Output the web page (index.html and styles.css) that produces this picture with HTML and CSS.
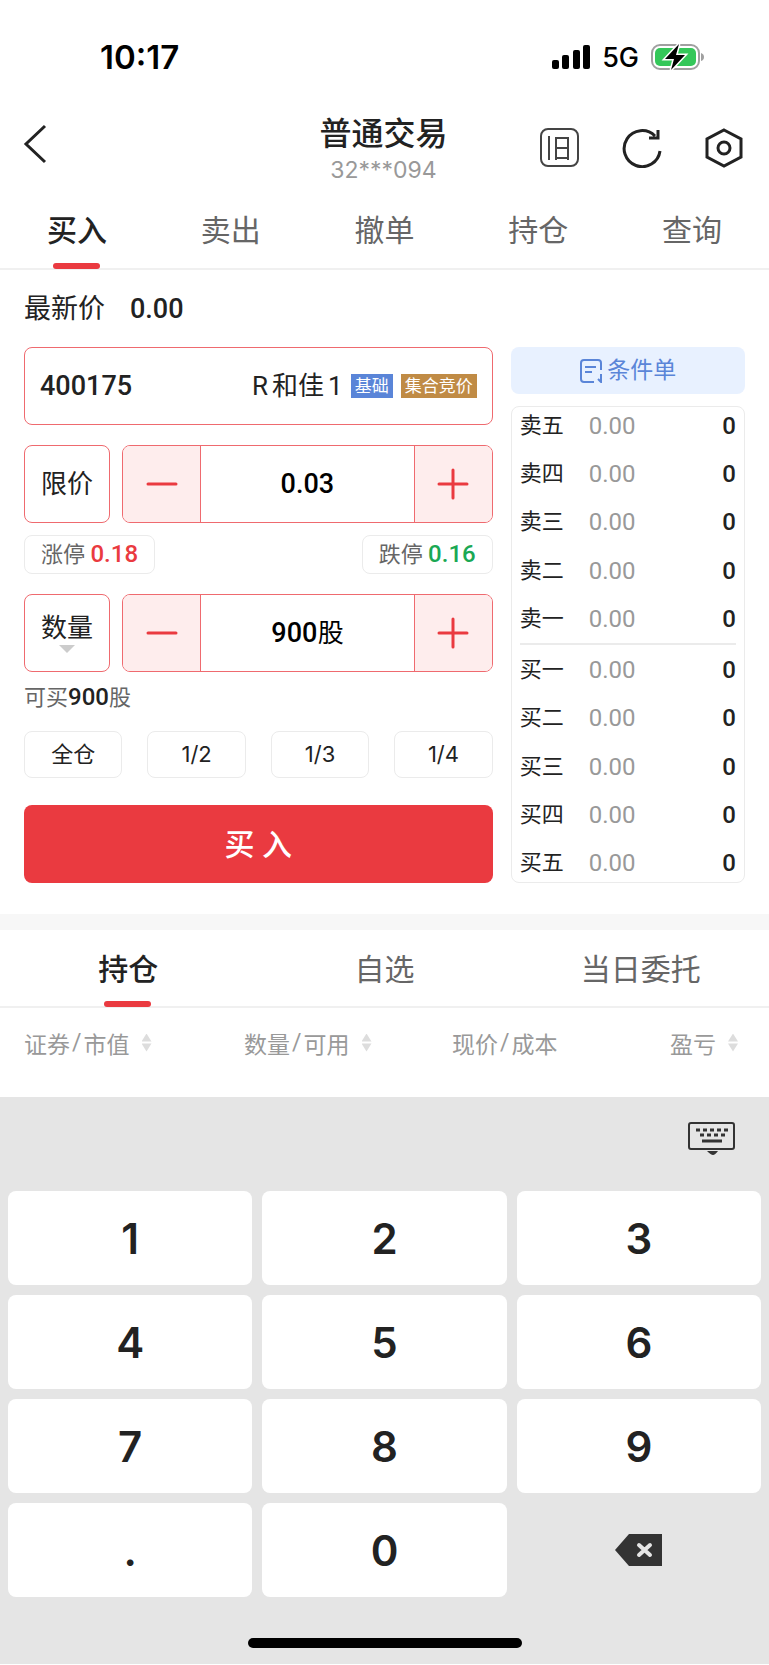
FILE: index.html
```html
<!DOCTYPE html>
<html lang="zh-CN">
<head>
    <meta charset="UTF-8">
    <meta name="viewport" content="width=device-width, initial-scale=1.0">
    <title>普通交易</title>
    <link rel="stylesheet" href="styles.css">
</head>
<body>

    <!-- Status Bar -->
    <div class="status-bar">
        <span class="time">10:17</span>
        <div class="status-icons">
            <svg width="38" height="25" viewBox="0 0 38 25">
                <rect x="0" y="15" width="7" height="9" rx="2"/>
                <rect x="10" y="10" width="7" height="14" rx="2"/>
                <rect x="21" y="5" width="7" height="19" rx="2"/>
                <rect x="31" y="0" width="7" height="24" rx="2"/>
            </svg>
            <span class="network">5G</span>
            <svg width="54" height="28" viewBox="0 0 54 28">
                <rect x="1" y="2" width="47" height="24" rx="8" fill="none" stroke="#a0a0a0" stroke-width="2"/>
                <rect x="4" y="5" width="41" height="18" rx="5" fill="#34c759"/>
                <path d="M50 10q3 1 3 4t-3 4z" fill="#a0a0a0"/>
                <path d="M28 1L14 16h9l-3 11 14-15h-9z" stroke="#fff" stroke-width="3" paint-order="stroke"/>
            </svg>
        </div>
    </div>

    <!-- Header -->
    <header class="header">
        <button class="icon-btn back" aria-label="返回">
            <svg width="24" height="40" viewBox="0 0 24 40"><path d="M22 2L3 20l19 18" stroke-width="3"/></svg>
        </button>
        <div class="heading">
            <h1>普通交易</h1>
            <p>32***094</p>
        </div>
        <div class="header-actions">
            <button class="icon-btn" aria-label="旧版">
                <svg width="40" height="40" viewBox="0 0 40 40">
                    <rect x="1" y="1" width="37" height="37" rx="7" stroke="#444" stroke-width="2"/>
                    <path d="M9 8v24M16 32V10h12v22M16 20h12M16 30h12" stroke="#444" stroke-width="2"/>
                </svg>
            </button>
            <button class="icon-btn" aria-label="刷新">
                <svg width="40" height="40" viewBox="0 0 40 40">
                    <path d="M38 23A18 18 0 1 1 33 8M36 2v8h-9" stroke-width="3"/>
                </svg>
            </button>
            <button class="icon-btn" aria-label="设置">
                <svg width="40" height="40" viewBox="0 0 40 40">
                    <path d="M20 2l17 9v18l-17 9-17-9V11z" stroke-width="3"/>
                    <circle cx="20" cy="20" r="6" stroke-width="3"/>
                </svg>
            </button>
        </div>
    </header>

    <!-- Trade Tabs -->
    <nav class="tabs">
        <a href="#buy" class="active">买入</a>
        <a href="#sell">卖出</a>
        <a href="#cancel">撤单</a>
        <a href="#hold">持仓</a>
        <a href="#query">查询</a>
    </nav>

    <!-- Order Form -->
    <section class="trade" id="buy">
        <p class="latest">最新价<b>0.00</b></p>
        <div class="trade-cols">
            <form class="order">
                <div class="stock">
                    <input type="text" value="400175" aria-label="证券代码">
                    <span class="stock-name">R<span>和佳</span>1</span>
                    <span class="badge blue">基础</span>
                    <span class="badge gold">集合竞价</span>
                </div>
                <div class="field">
                    <button type="button" class="kind">限价</button>
                    <div class="stepper">
                        <button type="button" aria-label="减少价格"><svg width="32" height="32" viewBox="0 0 32 32"><path d="M2 16h28"/></svg></button>
                        <label class="value"><input type="text" value="0.03" aria-label="价格"></label>
                        <button type="button" aria-label="增加价格"><svg width="32" height="32" viewBox="0 0 32 32"><path d="M2 16h28M16 2v28"/></svg></button>
                    </div>
                </div>
                <div class="limits">
                    <button type="button">涨停 <b class="up">0.18</b></button>
                    <button type="button">跌停 <b class="down">0.16</b></button>
                </div>
                <div class="field">
                    <button type="button" class="kind">数量<i class="caret"></i></button>
                    <div class="stepper">
                        <button type="button" aria-label="减少数量"><svg width="32" height="32" viewBox="0 0 32 32"><path d="M2 16h28"/></svg></button>
                        <label class="value"><input type="text" class="amount" value="900" aria-label="数量">股</label>
                        <button type="button" aria-label="增加数量"><svg width="32" height="32" viewBox="0 0 32 32"><path d="M2 16h28M16 2v28"/></svg></button>
                    </div>
                </div>
                <p class="available">可买<b>900</b>股</p>
                <div class="portions">
                    <button type="button">全仓</button>
                    <button type="button">1/2</button>
                    <button type="button">1/3</button>
                    <button type="button">1/4</button>
                </div>
                <button type="button" class="submit">买 入</button>
            </form>

            <div class="quotes">
                <button type="button" class="condition">
                    <svg width="24" height="24" viewBox="0 0 24 24">
                        <path d="M15 23H5q-3 0-3-3V4q0-3 3-3h14q3 0 3 3v7M22 15v8l-3-3M6 8h11M6 13h7"/>
                    </svg>
                    条件单
                </button>
                <div class="book">
                    <table>
                        <tr><th>卖五</th><td>0.00</td><td>0</td></tr>
                        <tr><th>卖四</th><td>0.00</td><td>0</td></tr>
                        <tr><th>卖三</th><td>0.00</td><td>0</td></tr>
                        <tr><th>卖二</th><td>0.00</td><td>0</td></tr>
                        <tr class="last-ask"><th>卖一</th><td>0.00</td><td>0</td></tr>
                        <tr><th>买一</th><td>0.00</td><td>0</td></tr>
                        <tr><th>买二</th><td>0.00</td><td>0</td></tr>
                        <tr><th>买三</th><td>0.00</td><td>0</td></tr>
                        <tr><th>买四</th><td>0.00</td><td>0</td></tr>
                        <tr><th>买五</th><td>0.00</td><td>0</td></tr>
                    </table>
                </div>
            </div>
        </div>
    </section>

    <!-- Holdings -->
    <section class="holdings" id="hold">
        <nav class="tabs">
            <a href="#hold" class="active">持仓</a>
            <a href="#watch">自选</a>
            <a href="#orders">当日委托</a>
        </nav>
        <div class="columns">
            <button>证券<span>/</span>市值<i class="sort"></i></button>
            <button>数量<span>/</span>可用<i class="sort"></i></button>
            <button>现价<span>/</span>成本</button>
            <button>盈亏<i class="sort"></i></button>
        </div>
    </section>

    <!-- Number Keyboard -->
    <section class="keyboard">
        <div class="keyboard-bar">
            <button class="icon-btn" aria-label="收起键盘">
                <svg width="48" height="34" viewBox="0 0 48 34">
                    <rect x="1" y="1" width="45" height="26" rx="2" stroke-width="2"/>
                    <path d="M8 8h32" stroke-width="3" stroke-dasharray="4 3"/>
                    <path d="M12 13h25" stroke-width="3" stroke-dasharray="4 3"/>
                    <path d="M14 19h20" stroke-width="3"/>
                    <path d="M19 29h11q-3 4-5 4t-6-4z" fill="#333" stroke="none"/>
                </svg>
            </button>
        </div>
        <div class="keys">
            <button>1</button>
            <button>2</button>
            <button>3</button>
            <button>4</button>
            <button>5</button>
            <button>6</button>
            <button>7</button>
            <button>8</button>
            <button>9</button>
            <button>.</button>
            <button>0</button>
            <button class="delete" aria-label="删除">
                <svg width="48" height="32" viewBox="0 0 48 32">
                    <path d="M0 16L14 0h33v32H14z" fill="#333"/>
                    <path d="M24 11l11 10M35 11L24 21" stroke="#e5e5e5" stroke-width="4" stroke-linecap="round"/>
                </svg>
            </button>
        </div>
        <div class="home-bar"></div>
    </section>

</body>
</html>
```

FILE: styles.css
```css
/* General Styles */
* {
    box-sizing: border-box;
}

body {
    font-family: Roboto, "Noto Sans CJK SC", sans-serif;
    margin: 0;
    background-color: #fff;
    color: #222;
}

h1, p {
    margin: 0;
}

button, input {
    font: inherit;
    color: inherit;
    margin: 0;
    padding: 0;
    border: none;
    background: none;
}

button {
    cursor: pointer;
}

b {
    font-weight: 500;
}

svg {
    display: block;
}

/* Status Bar */
.status-bar {
    display: flex;
    justify-content: space-between;
    align-items: center;
    height: 114px;
    padding: 0 64px 0 100px;
    font-family: Inter, sans-serif;
    color: #000;
}

.time {
    font-size: 33px;
    font-weight: 600;
}

.status-icons {
    display: flex;
    align-items: center;
}

.network {
    margin: 0 12px;
    font-size: 27px;
    font-weight: 500;
}

/* Header */
.header {
    display: grid;
    grid-template-columns: 1fr auto 1fr;
    align-items: center;
    height: 68px;
    padding: 0 25px 0 23px;
}

.icon-btn svg {
    fill: none;
    stroke: #222;
}

.back {
    justify-self: start;
    padding-bottom: 12px;
}

.heading {
    text-align: center;
}

.heading h1 {
    font-size: 32px;
    font-weight: 500;
    line-height: 40px;
}

.heading p {
    font-family: Inter, sans-serif;
    font-size: 23px;
    line-height: 32px;
    color: #999;
}

.header-actions {
    display: flex;
    justify-content: flex-end;
    gap: 42px;
    padding-bottom: 4px;
}

/* Tabs */
.tabs {
    display: flex;
    border-bottom: 2px solid #f0f0f0;
}

.tabs a {
    position: relative;
    flex: 1;
    height: 86px;
    font-size: 30px;
    line-height: 98px;
    text-align: center;
    text-decoration: none;
    color: #666;
}

.tabs .active {
    font-weight: 500;
    color: #222;
}

.tabs .active::after {
    content: "";
    position: absolute;
    left: 50%;
    bottom: -1px;
    width: 47px;
    height: 6px;
    margin-left: -24px;
    border-radius: 3px;
    background: #ea3a40;
}

/* Order Form */
.trade {
    padding: 0 24px 31px;
}

.latest {
    font-size: 27px;
    line-height: 78px;
}

.latest b {
    margin-left: 25px;
}

.trade-cols {
    display: grid;
    grid-template-columns: minmax(0, 2fr) minmax(0, 1fr);
    gap: 18px;
    margin-top: -1px;
}

.stock {
    display: flex;
    align-items: center;
    height: 78px;
    padding: 0 15px;
    border: 1px solid #ef6a6f;
    border-radius: 8px;
}

.stock input {
    flex: 1;
    min-width: 0;
    font-size: 27px;
    font-weight: 500;
}

.stock-name {
    font-size: 26px;
    line-height: 36px;
    white-space: nowrap;
}

.stock-name span {
    margin: 0 4px;
}

.badge {
    height: 24px;
    margin-left: 8px;
    padding: 0 4px;
    font-size: 17px;
    line-height: 24px;
    white-space: nowrap;
    color: #fff;
}

.blue {
    background: #5a85d8;
}

.gold {
    background: #c08b45;
}

.field {
    display: flex;
    gap: 12px;
    height: 78px;
    margin-top: 20px;
}

.kind {
    width: 86px;
    border: 1px solid #ef6a6f;
    border-radius: 8px;
    font-size: 26px;
    line-height: 30px;
}

.caret {
    display: block;
    width: 16px;
    height: 8px;
    margin: 2px auto 0;
    background: #ccc;
    clip-path: polygon(0 0, 100% 0, 50% 100%);
}

.stepper {
    display: flex;
    flex: 1;
    border: 1px solid #ef6a6f;
    border-radius: 8px;
    overflow: hidden;
}

.stepper button {
    display: flex;
    justify-content: center;
    align-items: center;
    width: 77px;
    background: #feeded;
}

.stepper svg {
    fill: none;
    stroke: #ea3a40;
    stroke-width: 3;
    stroke-linecap: round;
}

.value {
    display: flex;
    flex: 1;
    justify-content: center;
    align-items: baseline;
    border: solid #ef6a6f;
    border-width: 0 1px;
    font-size: 26px;
    line-height: 76px;
    color: #000;
}

.value input {
    width: 100%;
    height: 76px;
    font-size: 27px;
    font-weight: 500;
    text-align: center;
}

.value .amount {
    width: 47px;
}

.limits {
    display: flex;
    justify-content: space-between;
    margin-top: 12px;
}

.limits button {
    width: 131px;
    height: 39px;
    border: 1px solid #ebebeb;
    border-radius: 8px;
    font-size: 22px;
    line-height: 36px;
    color: #666;
}

.limits b {
    font-size: 24px;
}

.limits .up {
    color: #ea3a40;
}

.limits .down {
    color: #1aa854;
}

.available {
    margin-top: 10px;
    font-size: 22px;
    line-height: 30px;
    color: #666;
}

.available b {
    font-size: 24px;
    color: #222;
}

.portions {
    display: grid;
    grid-template-columns: repeat(4, 1fr);
    gap: 25px;
    margin-top: 18px;
}

.portions button {
    height: 47px;
    padding-bottom: 2px;
    border: 1px solid #ebebeb;
    border-radius: 8px;
    font-family: Inter, "Noto Sans CJK SC", sans-serif;
    font-size: 22px;
    line-height: 32px;
}

.submit {
    width: 100%;
    height: 78px;
    margin-top: 27px;
    padding-bottom: 4px;
    border-radius: 8px;
    background: #ea3a40;
    font-size: 30px;
    font-weight: 500;
    color: #fff;
}

/* Quotes */
.quotes {
    display: flex;
    flex-direction: column;
    gap: 12px;
}

.condition {
    display: flex;
    justify-content: center;
    align-items: center;
    gap: 4px;
    height: 47px;
    border-radius: 8px;
    background: #e8f1ff;
    font-size: 23px;
    line-height: 30px;
    color: #5a85d8;
}

.condition svg {
    fill: none;
    stroke: #5a85d8;
    stroke-width: 2;
}

.book {
    flex: 1;
    padding: 0 8px;
    border: 1px solid #ebebeb;
    border-radius: 8px;
    overflow: hidden;
}

.book table {
    width: 100%;
    height: 485px;
    margin: -5px 0;
    border-collapse: collapse;
    font-size: 24px;
    line-height: 30px;
}

.book th,
.book td {
    padding: 0;
    text-align: left;
}

.book th {
    width: 69px;
    font-size: 22px;
    font-weight: 400;
}

.book td {
    color: #999;
}

.book td:last-child {
    font-weight: 500;
    text-align: right;
    color: #222;
}

.last-ask {
    border-bottom: 2px solid #ebebeb;
}

/* Holdings */
.holdings {
    border-top: 16px solid #f7f7f7;
}

.holdings .tabs a {
    height: 76px;
    line-height: 80px;
}

.columns {
    display: grid;
    grid-template-columns: 220px 208px 1fr auto;
    height: 89px;
    padding: 0 31px 20px 24px;
}

.columns button {
    display: flex;
    align-items: center;
    font-size: 23px;
    color: #999;
}

.columns span {
    margin: 0 2px;
}

.sort {
    width: 10px;
    height: 18px;
    margin-left: 12px;
    background: #ddd;
    clip-path: polygon(50% 0, 100% 8px, 100% 10px, 50% 100%, 0 10px, 100% 10px, 100% 8px, 0 8px);
}

/* Number Keyboard */
.keyboard {
    padding: 0 8px 16px;
    background: #e5e5e5;
}

.keyboard-bar {
    display: flex;
    justify-content: flex-end;
    height: 94px;
    padding: 25px 25px 0 0;
}

.keyboard-bar .icon-btn {
    height: 34px;
}

.keyboard-bar svg {
    stroke: #333;
}

.keys {
    display: grid;
    grid-template-columns: repeat(3, 1fr);
    gap: 10px;
}

.keys button {
    height: 94px;
    border-radius: 8px;
    background: #fff;
    font-family: Inter, sans-serif;
    font-size: 42px;
    font-weight: 600;
}

.keys .delete {
    display: flex;
    justify-content: center;
    align-items: center;
    background: none;
}

.home-bar {
    width: 274px;
    height: 10px;
    margin: 41px auto 0;
    border-radius: 5px;
    background: #000;
}
```
